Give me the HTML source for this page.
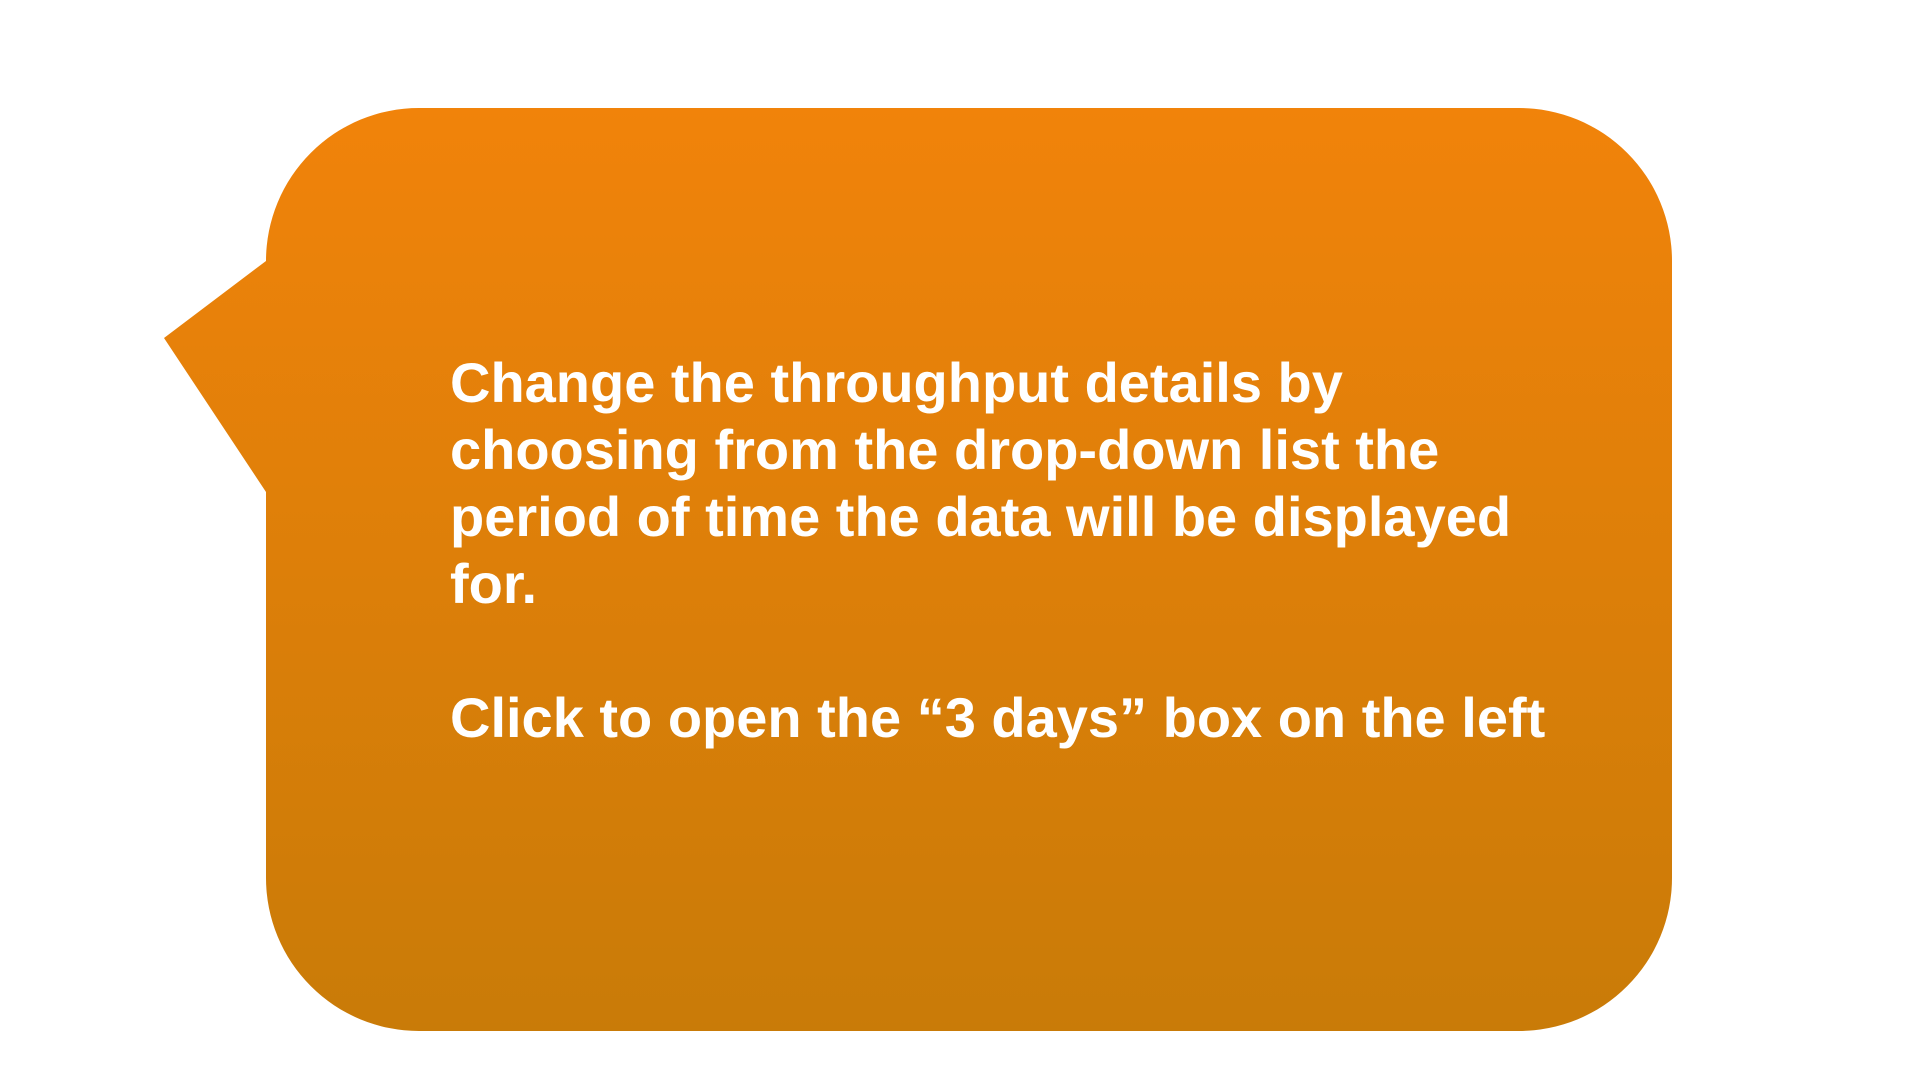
<!DOCTYPE html>
<html><head><meta charset="utf-8"><style>
html,body{margin:0;padding:0;background:#fff;width:1920px;height:1080px;overflow:hidden}
svg{position:absolute;left:0;top:0}
.t{position:absolute;left:450px;top:349px;font-family:"Liberation Sans",sans-serif;font-weight:bold;font-size:56px;line-height:67px;color:#fff;white-space:nowrap}
</style></head><body>
<svg width="1920" height="1080" viewBox="0 0 1920 1080">
<defs><linearGradient id="g" x1="0" y1="0" x2="0" y2="1">
<stop offset="0" stop-color="#f1830a"/><stop offset="1" stop-color="#c97b08"/></linearGradient></defs>
<path d="M419 108 H1519 A153 153 0 0 1 1672 261 V878 A153 153 0 0 1 1519 1031 H419 A153 153 0 0 1 266 878 V492 L164 338 L266 261 A153 153 0 0 1 419 108 Z" fill="url(#g)"/>
</svg>
<div class="t">Change the throughput details by<br>choosing from the drop-down list the<br>period of time the data will be displayed<br>for.<br><br>Click to open the “3 days” box on the left</div>
</body></html>
